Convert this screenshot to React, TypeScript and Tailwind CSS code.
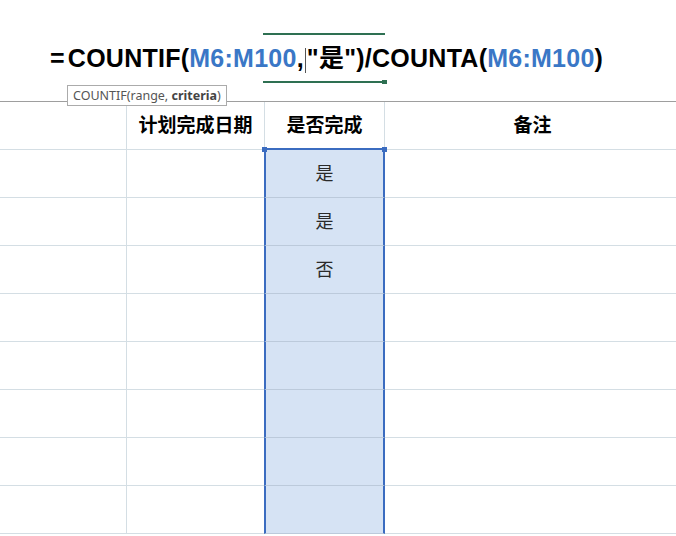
import React from "react";

const rows = ["是", "是", "否", "", "", "", "", ""];

export default function App() {
  return (
    <div className="w-[676px] h-[536px] overflow-hidden bg-white" style={{ fontFamily: '"Noto Sans", "Noto Sans CJK SC", sans-serif' }}>
      {/* formula area */}
      <div className="relative h-[101px]">
        <div
          className="pt-[42px] pl-[50px] text-[25px] leading-[32px] font-bold tracking-[0.25px] text-black whitespace-nowrap"
          style={{ fontFamily: '"Liberation Sans", "Noto Sans CJK SC", sans-serif' }}
        >
          <span className="mr-[3px]">=</span>
          <span>COUNTIF(</span>
          <span className="text-[#3a77c6]">M6:M100</span>
          <span>,</span>
          <span className="inline-block w-px h-[25px] bg-[#555] align-middle mx-[1px]"></span>
          <span>"是")/COUNTA(</span>
          <span className="text-[#3a77c6]">M6:M100</span>
          <span>)</span>
        </div>
        <div className="absolute left-[263px] top-[33px] w-[122px] h-[2px] bg-[#2e7052]"></div>
        <div className="absolute left-[263px] top-[81px] w-[120px] h-[2px] bg-[#2e7052]"></div>
        <div className="absolute left-[382px] top-[80px] w-[5px] h-[4px] bg-[#2e7052]"></div>
        <div className="absolute left-[67px] top-[85px] h-[21px] px-[5px] border border-[#ababab] bg-white text-[12.5px] leading-[19px] text-[#555] whitespace-nowrap z-10">
          COUNTIF(range, <b className="font-bold text-[#444]">criteria</b>)
        </div>
      </div>
      <div className="h-px bg-[#9e9e9e]"></div>
      {/* grid */}
      <div className="grid grid-cols-[127px_138px_120px_1fr]">
        {/* header */}
        <div className="h-[48px] border-r border-b border-[#d4dee4]"></div>
        <div className="h-[48px] border-r border-b border-[#d4dee4] flex items-center justify-center text-[19px] font-bold text-black">计划完成日期</div>
        <div className="relative h-[48px] border-r border-b-2 border-r-[#d4dee4] border-b-[#3b6cc0] flex items-center justify-center text-[19px] font-bold text-black">
          是否完成
          <div className="absolute -left-[3px] -bottom-[4px] w-[5px] h-[5px] bg-[#3b6cc0]"></div>
          <div className="absolute -right-[3px] -bottom-[4px] w-[5px] h-[5px] bg-[#3b6cc0]"></div>
        </div>
        <div className="h-[48px] border-b border-[#d4dee4] flex items-center justify-center text-[19px] font-bold text-black pl-[4px]">备注</div>
        {rows.map((v, i) => (
          <React.Fragment key={i}>
            <div className="h-[48px] border-r border-b border-[#d4dee4]"></div>
            <div className="h-[48px] border-b border-[#d4dee4]"></div>
            <div className="h-[48px] -ml-px border-x-2 border-x-[#3b6cc0] border-b border-b-[#bccadb] bg-[#d6e3f4] flex items-center justify-center text-[18px] text-[#2a2a2a]">
              {v}
            </div>
            <div className="h-[48px] border-b border-[#d4dee4]"></div>
          </React.Fragment>
        ))}
      </div>
    </div>
  );
}
